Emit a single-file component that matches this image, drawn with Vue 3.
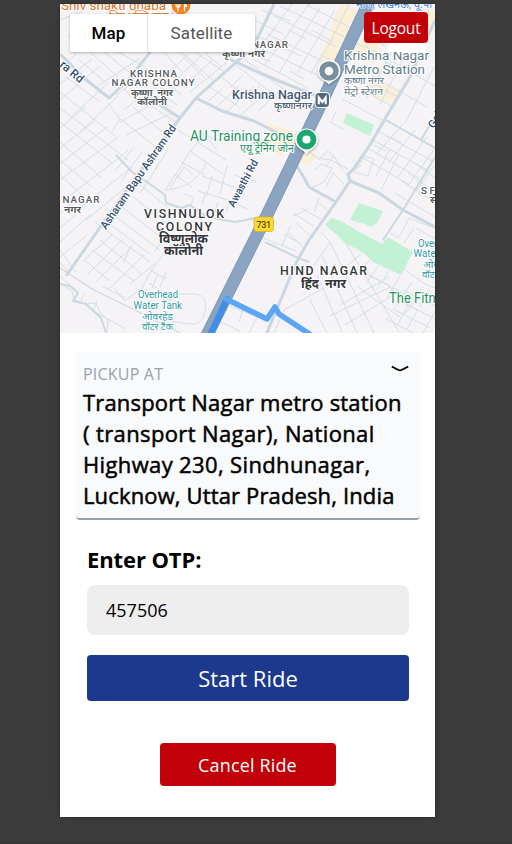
<script setup>
import { ref } from 'vue'

const otp = ref('457506')

// Minor streets, drawn on the map canvas
const streets = [
  'M60 68L76 54M60 84L92 59M60 100L100 66M70 118L109 82M80 132L118 96M60 128L85 107M60 148L95 121M60 164L108 126M60 180L118 137M64 200L128 151M74 213L132 167M86 220L140 176',
  'M66 77L100 102M60 92L115 136M60 108L128 160M60 122L112 163M60 142L102 178M60 160L92 187M60 175L85 198M78 59L105 82M90 52L118 77M104 52L130 73M118 52L142 65',
  'M60 20L85 10M68 36L84 48M98 86L140 58M116 95L150 71M121 85L132 98M132 75L146 86M142 65L160 79M124 110L140 97M120 122L158 101M126 135L172 113M118 117L158 149M133 107L168 137M148 104L176 122M108 103L120 119L112 132',
  'M159 47L182 72M166 40L205 78M182 53L215 82M195 52L226 73M170 72L188 54M176 80L203 54M184 87L213 59M190 92L226 63M205 53L222 67M161 80L182 95M153 87L177 105M146 94L172 112',
  'M205 104L222 89M215 108L239 86M226 112L254 87M238 117L270 90M210 87L239 107M222 77L252 102M236 65L279 99M243 58L290 94M230 88L243 75M245 99L260 86M258 111L278 93',
  'M133 148L116 170M142 152L122 180M151 158L132 187M158 166L140 193M168 150L155 169M178 130L193 139L205 133L215 141L225 136',
  'M165 190L178 171L190 151L205 134M165 190C191 188 201 174 207 162M174 174L192 187M181 162L205 175M190 151L223 174M197 142L226 160M207 137L217 150M170 188L184 167L193 175',
  'M198 191L228 200M202 176L234 187M205 192L202 205M212 176L206 197M227 166L220 194M235 175L257 182M218 202L214 215M229 203L226 212M237 204L249 210M184 194L194 198L190 206',
  'M60 213L76 200M60 228L86 206M60 242L91 214M60 257L86 236M82 262L112 235M88 274L123 239M96 282L133 245M109 289L145 254M130 284L156 263',
  'M94 221L115 237L142 256L150 262M100 240L126 261L142 274M92 250L116 268L134 281M84 260L110 281M107 222L150 254M112 214L160 250M122 207L164 240M132 196L168 224M139 184L172 211',
  'M130 247L124 262M166 236L154 252M178 235L160 259L149 274L142 288L125 301L114 288M102 286L125 298M150 270L166 279M158 274L152 288M166 272L160 287M149 283L160 290',
  'M60 283L72 291L74 299L84 304L96 303L100 312L108 320L107 333M97 300L93 311L126 329M60 250L76 272M60 262L68 272M76 290L60 276M84 293L80 303',
  'M146 295L170 300L178 294L196 294C206 296 206 303 205 312C202 326 194 326 172 321L146 311M230 306L257 317M243 310L239 322M257 317L249 333M219 321L240 331M174 321L168 333',
  'M262 10L290 21M254 20L283 34M249 34L276 43M243 50L271 62M292 4L267 38L254 56M309 4L285 38L264 66M320 8L297 44L279 73M335 10L315 43L297 73M349 4L330 43L311 73',
  'M274 16L337 47M267 34L329 64M260 48L317 75M253 59L308 88M280 6L349 39M307 5L359 32M282 47L301 56M288 30L306 39M312 30L333 42M320 55L336 62M290 71L304 79',
  'M372 12L356 43M397 42L367 98M410 46L380 104M434 67L405 123M365 46L435 86M354 65L427 107M348 82L395 108M342 99L382 120M349 39L366 48M374 40L385 46M385 62L402 71M368 81L400 98M330 122L345 130M336 112L331 122',
  'M376 130L434 162M371 139L427 170M366 147L419 178M360 156L408 184M403 124L376 154M415 130L388 163M427 137L398 177M435 148L407 187M434 166L416 191',
  'M365 156L374 159L368 176L354 172L365 156M348 172L362 165M390 149L376 176M399 154L381 190M374 145L386 151M391 137L401 143M401 181L435 202M408 173L435 192M416 164L435 178M395 193L435 217',
  'M308 151L317 158L331 160L348 169M318 160L328 151L337 160M326 166L334 156L343 171M314 170L321 164L332 168L324 182M324 182L311 188M333 173L326 187M332 172L344 184',
  'M308 209L293 216M314 226L293 213M321 219L301 208M296 223L313 238M288 233L306 249M319 198L314 212M326 209L319 203M333 205L328 212',
  'M290 226L282 246M278 244L296 251M284 234L301 244M257 235L277 244M343 225L354 229M321 232L330 242L311 270',
  'M330 242L374 333M341 235L399 332M322 255L357 333M317 275L342 332M324 288L284 310L274 333M310 300L327 333M340 305L389 277M330 316L390 287M345 325L395 294M357 286L377 301L400 317M363 272L388 285L410 307',
  'M341 235L372 253L397 264L425 284L435 288M361 254L348 265M369 260L357 276M379 265L366 283M389 271L377 289M400 276L387 298M412 282L396 306M423 287L405 314M430 290L420 307M370 276L392 287L415 300',
  'M403 290L435 306M398 300L435 319M393 309L430 328M386 319L413 333M435 312L423 333M418 309L407 329M410 300L398 324M399 237L409 218L421 223L435 228M416 228L435 239M399 238L388 232M414 228L404 243',
]

const mainStreets = [
  'M60 54L84 78L109 98L129 79L151 51L165 25L179 4',
  'M143 90L151 99L180 118L196 98L223 74L248 52L256 41L274 4',
  'M196 98L222 111L254 121L286 137',
  'M180 118L138 174L101 226L66 276',
  'M225 57L262 74L316 96',
  'M296 165L303 176L309 187L336 202M435 20L410 77L386 117L370 145L352 171L348 174L350 181L336 202L309 240L296 263L266 335',
  'M350 181L379 193L403 210L435 227',
]

const midStreets = [
  'M384 119L435 148M435 157L403 210L383 240M421 140L435 116M265 242L296 257L309 262',
  'M116 155L132 172L147 182L165 195L166 203L181 208L190 205L202 214L218 219L235 222L256 218',
  'M60 284L70 286L78 293L73 301L86 304L101 318L106 333',
]

const labels = [
  { t: 'Shiv shakti dhaba', x: 61, y: 9.500, s: 13, w: 105, c: 'orange' },
  { t: 'शिव शक्ति ढाबा', x: 109, y: 19, s: 10, w: 60, c: 'orange' },
  { t: 'माल, लखनऊ, यू.पी', x: 356, y: 8, s: 10.5, w: 76, c: 'azure' },
  { t: 'NAGAR', x: 252, y: 48, s: 9.8, w: 36, c: 'gray caps' },
  { t: 'कृष्णा नगर', x: 222, y: 57, s: 9.5, w: 43, c: 'gray' },
  { t: 'KRISHNA', x: 130, y: 76.500, s: 9.8, w: 47, c: 'gray caps' },
  { t: 'NAGAR COLONY', x: 111.500, y: 86, s: 9.8, w: 83, c: 'gray caps' },
  { t: 'कृष्णा  नगर', x: 131, y: 96, s: 10, w: 42, c: 'gray' },
  { t: 'कॉलोनी', x: 137, y: 105, s: 10, w: 30, c: 'gray' },
  { t: 'Krishna Nagar', x: 344, y: 60, s: 13.5, w: 85, c: 'slate' },
  { t: 'Metro Station', x: 344, y: 73.5, s: 13.5, w: 81, c: 'slate' },
  { t: 'कृष्णा नगर', x: 344, y: 84, s: 10, w: 40, c: 'slate' },
  { t: 'मेट्रो स्टेशन', x: 344, y: 94.5, s: 10, w: 39, c: 'slate' },
  { t: 'Krishna Nagar', x: 232, y: 99, s: 12.5, w: 80, c: 'metro' },
  { t: 'कृष्णानगर', x: 274, y: 109, s: 10, w: 38, c: 'metro' },
  { t: 'AU Training zone', x: 190, y: 141, s: 14, w: 103, c: 'green' },
  { t: 'एयू ट्रेनिंग जोन', x: 240, y: 152, s: 10.5, w: 54, c: 'green' },
  { t: 'NAGAR', x: 62.500, y: 203, s: 9.8, w: 37, c: 'gray caps' },
  { t: 'नगर', x: 64, y: 213, s: 9.5, w: 17, c: 'gray' },
  { t: 'VISHNULOK', x: 144, y: 218, s: 12.3, w: 80, c: 'dark caps' },
  { t: 'COLONY', x: 156, y: 230.5, s: 12.3, w: 56, c: 'dark caps' },
  { t: 'विष्णुलोक', x: 159, y: 243, s: 12.5, w: 49, c: 'dark' },
  { t: 'कॉलोनी', x: 164, y: 255, s: 12.5, w: 39, c: 'dark' },
  { t: 'HIND NAGAR', x: 280, y: 275, s: 12.3, w: 87, c: 'dark caps' },
  { t: 'हिंद  नगर', x: 301, y: 288, s: 12.5, w: 45, c: 'dark' },
  { t: 'SE', x: 421, y: 194, s: 9.8, w: 14, c: 'gray caps' },
  { t: 'से', x: 430, y: 203, s: 9.5, c: 'gray' },
  { t: 'Overhead', x: 138, y: 298, s: 10.3, w: 40, c: 'teal' },
  { t: 'Water Tank', x: 133.500, y: 308.5, s: 10.3, w: 48.500, c: 'teal' },
  { t: 'ओवरहेड', x: 142, y: 319.5, s: 9.5, w: 31, c: 'teal' },
  { t: 'वॉटर टैंक', x: 142, y: 329.5, s: 9.5, w: 31, c: 'teal' },
  { t: 'Overhead', x: 418, y: 246.5, s: 10.3, w: 40, c: 'teal' },
  { t: 'Water Tank', x: 413.500, y: 257, s: 10.3, w: 48.500, c: 'teal' },
  { t: 'ओवरहेड', x: 423, y: 268, s: 9.5, w: 31, c: 'teal' },
  { t: 'वॉटर टैंक', x: 422, y: 278, s: 9.5, w: 31, c: 'teal' },
  { t: 'The Fitness', x: 389, y: 303, s: 13.8, w: 67, c: 'green' },
]

const roadLabels = [
  { t: 'ra Rd', x: 59, y: 66, s: 12, w: 27, r: 40 },
  { t: 'Asharam Bapu Ashram Rd', x: 106, y: 230, s: 11.3, w: 124, r: -55.3 },
  { t: 'Awasthi Rd', x: 234, y: 208, s: 11, w: 52, r: -62 },
  { t: 'Gol', x: 434, y: 129, s: 11, w: 17, r: -60 },
]

const isHindi = (t) => /[\u0900-\u097f]/.test(t)
const lenAdjust = (l) => (l.c && l.c.includes('caps') ? 'spacing' : 'spacingAndGlyphs')
</script>

<template>
  <div class="stage">
    <main class="phone">
      <section class="map">
        <svg class="canvas" viewBox="60 4 375 329" width="375" height="329">
          <rect x="60" y="4" width="375" height="329" fill="#f5f3f5" />
          <g fill="#fcefd7">
            <path d="M342 4L357 10L348 32L338 49L341 58L325 66L318 62L330 35L334 17Z" />
            <path d="M361 37L382 41L373 59L352 55Z" />
            <path d="M425 8L435 12V32L423 26Z" />
            <path d="M373 77L400 91L396 103L369 96Z" />
            <path d="M267 123L290 130L300 139L280 157L268 150Z" />
            <path d="M309 142L317 157L307 165L296 160Z" />
          </g>
          <g class="street">
            <path v-for="(d, i) in streets" :key="i" :d="d" />
          </g>
          <g class="mid-street">
            <path v-for="(d, i) in midStreets" :key="i" :d="d" />
          </g>
          <g class="main-street">
            <path v-for="(d, i) in mainStreets" :key="i" :d="d" />
          </g>
          <g fill="#c3f1d5">
            <path d="M347 113L374 125L370 136L343 123Z" />
            <path d="M359 203L383 211L378 222L371 227L365 224L350 220Z" />
            <path d="M331 218L341 221L356 230L382 244L388 237L413 252L401 275L373 262L364 253L345 243L337 235L325 225Z" />
          </g>
          <path d="M60 268L94 290L139 312L180 333" class="rail" />
          <path d="M369 2L318 110L266 217L204 341" class="highway-edge" />
          <path d="M369 2L318 110L266 217L204 341" class="highway" />
          <path d="M207.500 341L227 299" class="route-strong" />
          <path d="M226 299L267 319L275 307L279 314L314 337" class="route" />

          <text
            v-for="(l, i) in labels" :key="'l' + i"
            :class="['label', l.c, { hindi: isHindi(l.t) }]" :x="l.x" :y="l.y" :font-size="l.s"
            :textLength="l.w" :lengthAdjust="lenAdjust(l)"
          >{{ l.t }}</text>
          <text
            v-for="(l, i) in roadLabels" :key="'r' + i"
            class="label road" :font-size="l.s" :textLength="l.w" :lengthAdjust="lenAdjust(l)"
            :transform="`translate(${l.x} ${l.y}) rotate(${l.r})`"
          >{{ l.t }}</text>

          <circle cx="181" cy="5" r="10.500" fill="#fff" />
          <circle cx="181" cy="5" r="9.500" fill="#f88125" />
          <path d="M176 0V5Q176 7 178 7V11.500M178 1V7M180 0V5Q180 7 178 7M184.500 11.500V1" fill="none" stroke="#fff" stroke-width="1.200" />
          <path d="M184 1Q187 3 187 7H184Z" fill="#fff" />

          <g class="pin">
            <path d="M329 84.500C326 81 317.500 79 317.500 71A11.500 11.500 0 1 1 340.500 71C340.500 79 332 81 329 84.500Z" fill="#fff" />
            <circle cx="329" cy="71" r="9.800" fill="#78909c" />
            <circle cx="329" cy="71" r="4.300" fill="#fff" />
          </g>
          <g class="pin">
            <path d="M306.500 154C304 150 295 148 295 140A11.500 11.500 0 1 1 318 140C318 148 309 150 306.500 154Z" fill="#fff" />
            <circle cx="306.500" cy="139.500" r="9.900" fill="#1ea672" />
            <circle cx="306.500" cy="139.500" r="4.100" fill="#fff" />
          </g>
          <rect x="314.500" y="92" width="15.500" height="16" rx="4.500" fill="#fff" />
          <rect x="315.500" y="93" width="13.500" height="14" rx="3.500" fill="#52687d" />
          <path d="M318.800 104.200V97.500L322.250 102L325.700 97.500V104.200" fill="none" stroke="#fff" stroke-width="2.100" />

          <rect x="254" y="217" width="19.500" height="14.500" rx="3" fill="#fdd835" stroke="#d9b21e" stroke-width=".8" />
          <text class="shield" x="256.500" y="228" font-size="9" textLength="14.500">731</text>
        </svg>

        <div class="map-type">
          <button class="type active">Map</button>
          <button class="type">Satellite</button>
        </div>
        <span class="map-control"></span>
        <button class="logout">Logout</button>
      </section>

      <section class="pickup">
        <div class="pickup-head">
          <span class="caption">PICKUP AT</span>
          <svg class="chevron" width="18" height="8" viewBox="0 0 18 8">
            <path d="M.8 1.500Q5 4 9 5.500Q13 4 17.200 1.500" />
          </svg>
        </div>
        <p class="address">
          <span class="l1">Transport Nagar metro station</span>
          <span class="l2">( transport Nagar), National</span>
          <span class="l3">Highway 230, Sindhunagar,</span>
          <span class="l4">Lucknow, Uttar Pradesh, India</span>
        </p>
      </section>

      <section class="otp">
        <label for="otp">Enter OTP:</label>
        <input id="otp" v-model="otp" type="text" />
        <button class="start">Start Ride</button>
      </section>
      <button class="cancel">Cancel Ride</button>
    </main>
  </div>
</template>

<style>
body { background: #3c3c3c; }
</style>

<style scoped>
* { box-sizing: border-box; }
.stage {
  height: 844px;
  padding: 4px 77px 25px 60px;
  overflow: hidden;
  background: #3c3c3c;
  border-bottom: 2px solid #363636;
  font-family: "Open Sans", "Noto Sans", sans-serif;
}
.phone {
  width: 375px;
  height: 813px;
  display: flex;
  flex-direction: column;
  background: #fff;
  box-shadow: 0 0 2px #222, 0 0 20px rgba(0, 0, 0, .06);
}
button { border: 0; padding: 0; font-family: inherit; }
.map { position: relative; height: 329px; flex: none; overflow: hidden; }
.canvas { display: block; }
.street { fill: none; stroke: #d0dde5; stroke-width: .95; }
.mid-street { fill: none; stroke: #cbd8e1; stroke-width: 2; stroke-linejoin: round; }
.main-street { fill: none; stroke: #cbd7e0; stroke-width: 3; stroke-linejoin: round; }
.rail { fill: none; stroke: #cfd6dc; stroke-width: 1.2; }
.highway-edge { fill: none; stroke: #7893b4; stroke-width: 12.6; }
.highway { fill: none; stroke: #8aa4c1; stroke-width: 11; }
.route-strong { fill: none; stroke: #3f8de4; stroke-width: 6.5; stroke-linecap: round; }
.route { fill: none; stroke: #5ba5f5; stroke-width: 5.5; stroke-linejoin: round; stroke-linecap: round; }
.label {
  font-family: Roboto, "Noto Sans", sans-serif;
  font-weight: 400;
  stroke: #fff;
  stroke-width: 2.2px;
  stroke-linejoin: round;
  paint-order: stroke;
  white-space: pre;
}
.orange { fill: #e0742a; }
.azure { fill: #3b82e8; stroke-width: 1px; }
.gray { fill: #565b60; font-weight: 500; }
.dark { fill: #33373c; font-weight: 500; }
.gray.hindi, .dark.hindi { font-weight: 700; }
.slate { fill: #607d8b; }
.metro { fill: #3f5873; font-weight: 500; }
.green { fill: #259263; }
.teal { fill: #2c97a5; }
.road { fill: #334f70; font-weight: 500; }
.shield { fill: #5d4c0b; font-family: Roboto, sans-serif; font-weight: 500; }
.pin { filter: drop-shadow(0 1px 1px rgba(0, 0, 0, .3)); }
.map-type {
  position: absolute;
  left: 10px;
  top: 10px;
  display: flex;
  height: 38px;
  background: #fff;
  border-radius: 2px;
  box-shadow: 0 1px 3px rgba(0, 0, 0, .28);
}
.type {
  width: 107px;
  background: none;
  color: #565656;
  font: 400 17px/38px Roboto, sans-serif;
  letter-spacing: .1px;
}
.type.active {
  width: 78px;
  color: #000;
  font-weight: 500;
  border-right: 1px solid #e3e3e3;
}
.map-control {
  position: absolute;
  left: 328px;
  top: 30px;
  width: 38px;
  height: 18px;
  background: #fff;
}
.logout {
  position: absolute;
  left: 304px;
  top: 8px;
  width: 64px;
  height: 31px;
  border-radius: 4px;
  background: #c10007;
  color: #fff;
  font-size: 15.5px;
  line-height: 32px;
  letter-spacing: -.2px;
}
.pickup {
  height: 168px;
  flex: none;
  margin: 19px 15px 0 16px;
  padding: 7px 8px 0 7px;
  background: #f9fafb;
  border-bottom: 2px solid #99a1af;
  border-radius: 4px;
}
.pickup-head {
  display: flex;
  justify-content: space-between;
  height: 28px;
  padding-right: 3px;
}
.caption { color: #99a1af; font-size: 16px; line-height: 31px; letter-spacing: .2px; }
.chevron { margin-top: 6px; fill: none; stroke: #000; stroke-width: 1.8; }
.address {
  display: flex;
  flex-direction: column;
  margin: 0;
  color: #000;
  font-size: 22px;
  font-weight: 500;
  line-height: 31px;
  white-space: nowrap;
  -webkit-text-stroke: .5px #000;
}
.l1 { letter-spacing: .18px; }
.l2 { letter-spacing: .38px; }
.l3 { letter-spacing: .36px; }
.l4 { letter-spacing: .14px; }
.otp {
  display: flex;
  flex-direction: column;
  flex: none;
  padding: 22px 26px 0 27px;
}
.otp label { font-size: 22px; font-weight: 700; line-height: 35px; color: #000; letter-spacing: -.1px; }
.otp input {
  height: 50px;
  margin-top: 8px;
  padding: 0 19px;
  border: 0;
  border-radius: 8px;
  background: #eee;
  color: #000;
  font-family: inherit;
  font-size: 18px;
}
.start {
  height: 46px;
  margin-top: 20px;
  border-radius: 4px;
  background: #1c398e;
  color: #fff;
  font-size: 22px;
  line-height: 46px;
}
.cancel {
  align-self: center;
  flex: none;
  width: 176px;
  height: 43px;
  margin-top: 42px;
  border-radius: 4px;
  background: #c10007;
  color: #fff;
  font-size: 18px;
  line-height: 44px;
  letter-spacing: .15px;
}
</style>
